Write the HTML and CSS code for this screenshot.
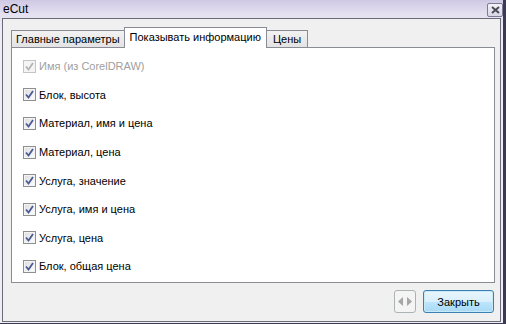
FILE: index.html
```html
<!DOCTYPE html>
<html>
<head>
<meta charset="utf-8">
<link rel="stylesheet" href="styles.css">
</head>
<body>
<div class="window">
  <div class="titlebar">
    <span class="title">eCut</span>
    <span class="tclose"><svg width="9" height="8" viewBox="0 0 9 8"><path d="M1 1 L8 7 M8 1 L1 7" stroke="#4a4a5a" stroke-width="2"/></svg></span>
  </div>
  <div class="frame">
    <div class="tabs">
      <div class="tab">Главные параметры</div>
      <div class="tab active">Показывать информацию</div>
      <div class="tab last">Цены</div>
    </div>
    <div class="panel">
      <label class="row disabled"><span class="cb"><svg width="9" height="9" viewBox="0 0 9 9"><path d="M1 4.5 L3.5 7.5 L8 1" fill="none" stroke="#b4b4b4" stroke-width="1.8"/></svg></span>Имя (из CorelDRAW)</label>
      <label class="row"><span class="cb"><svg width="9" height="9" viewBox="0 0 9 9"><path d="M1 4.5 L3.5 7.5 L8 1" fill="none" stroke="#4a5b98" stroke-width="1.8"/></svg></span>Блок, высота</label>
      <label class="row"><span class="cb"><svg width="9" height="9" viewBox="0 0 9 9"><path d="M1 4.5 L3.5 7.5 L8 1" fill="none" stroke="#4a5b98" stroke-width="1.8"/></svg></span>Материал, имя и цена</label>
      <label class="row"><span class="cb"><svg width="9" height="9" viewBox="0 0 9 9"><path d="M1 4.5 L3.5 7.5 L8 1" fill="none" stroke="#4a5b98" stroke-width="1.8"/></svg></span>Материал, цена</label>
      <label class="row"><span class="cb"><svg width="9" height="9" viewBox="0 0 9 9"><path d="M1 4.5 L3.5 7.5 L8 1" fill="none" stroke="#4a5b98" stroke-width="1.8"/></svg></span>Услуга, значение</label>
      <label class="row"><span class="cb"><svg width="9" height="9" viewBox="0 0 9 9"><path d="M1 4.5 L3.5 7.5 L8 1" fill="none" stroke="#4a5b98" stroke-width="1.8"/></svg></span>Услуга, имя и цена</label>
      <label class="row"><span class="cb"><svg width="9" height="9" viewBox="0 0 9 9"><path d="M1 4.5 L3.5 7.5 L8 1" fill="none" stroke="#4a5b98" stroke-width="1.8"/></svg></span>Услуга, цена</label>
      <label class="row"><span class="cb"><svg width="9" height="9" viewBox="0 0 9 9"><path d="M1 4.5 L3.5 7.5 L8 1" fill="none" stroke="#4a5b98" stroke-width="1.8"/></svg></span>Блок, общая цена</label>
    </div>
    <div class="footer">
      <div class="btn arrows"><svg width="14" height="9" viewBox="0 0 14 9"><path d="M0 4.5 L5 0 L5 9 Z M14 4.5 L9 0 L9 9 Z" fill="#a6a6a6"/></svg></div>
      <div class="btn primary">Закрыть</div>
    </div>
  </div>
</div>
</body>
</html>
```
FILE: styles.css
```css
html, body {
  margin: 0;
  padding: 0;
}
body {
  width: 506px;
  height: 324px;
  overflow: hidden;
  font-family: "Liberation Sans", Arial, sans-serif;
  font-size: 11px;
  color: #000;
}
.window {
  width: 506px;
  height: 324px;
  box-sizing: border-box;
  background: linear-gradient(#cfc8e4 0px, #e4e0f0 14px, #eeecf4 30px, #efeef4 100%);
  border-right: 3px solid #3c3a52;
  border-bottom: 1px solid #3c3a52;
  display: flex;
  flex-direction: column;
}
.titlebar {
  height: 18px;
  display: flex;
  align-items: center;
  justify-content: space-between;
  padding: 0 0 0 3px;
}
.title {
  font-size: 12px;
  color: #000;
  margin-top: -1px;
}
.tclose {
  width: 14px;
  height: 12px;
  border: 1px solid #7c7a94;
  border-radius: 2px;
  background: linear-gradient(#f4f3f8, #d8d6e4);
  display: flex;
  align-items: center;
  justify-content: center;
  margin-top: 1px;
  margin-right: 0;
}
.frame {
  flex: 1;
  margin: 0 2px 1px 2px;
  border: 1px solid #6a6a78;
  background: #f0f0f0;
  padding: 8px 5px 0 8px;
  display: flex;
  flex-direction: column;
}
.tabs {
  display: flex;
  align-items: flex-end;
  height: 20px;
  position: relative;
  z-index: 1;
}
.tab {
  height: 16px;
  line-height: 17px;
  padding: 0 4px;
  border: 1px solid #898c95;
  border-bottom: none;
  background: linear-gradient(#f2f2f2, #e3e3e3);
  margin-right: -1px;
  white-space: nowrap;
}
.tab.active {
  height: 20px;
  line-height: 18px;
  background: #fff;
  padding: 0 5px;
  margin-bottom: -1px;
  position: relative;
  z-index: 2;
}
.tab.last {
  padding: 0 6px;
}
.panel {
  height: 236px;
  box-sizing: border-box;
  background: #fff;
  border: 1px solid #898c95;
  padding: 4px 0 0 11px;
  display: flex;
  flex-direction: column;
}
.row {
  height: 28.6px;
  flex: none;
  display: flex;
  align-items: center;
  gap: 3px;
  white-space: nowrap;
}
.row.disabled {
  color: #a0a0a0;
}
.cb {
  width: 11px;
  height: 11px;
  border: 1px solid #8e8f8f;
  background: linear-gradient(135deg, #dcdcdc, #ffffff);
  display: flex;
  align-items: center;
  justify-content: center;
  box-shadow: inset 0 0 0 1px #f4f4f4;
}
.row.disabled .cb {
  border-color: #c4c4c4;
  background: #f4f4f4;
}
.footer {
  display: flex;
  justify-content: flex-end;
  gap: 7px;
  padding: 7px 1px 0 0;
}
.btn {
  height: 23px;
  box-sizing: border-box;
  border: 1px solid #707070;
  border-radius: 3px;
  background: linear-gradient(#f2f2f2 0%, #ebebeb 50%, #dddddd 51%, #cfcfcf 100%);
  display: flex;
  align-items: center;
  justify-content: center;
}
.arrows {
  width: 22px;
  border-color: #adb2b5;
  background: #f4f4f4;
}
.primary {
  width: 71px;
  border-color: #3c7fb1;
  background: linear-gradient(#eaf6fd 0%, #d9f0fc 50%, #bee6fd 51%, #a7d9f5 100%);
  box-shadow: inset 0 0 0 1px #c8eaf8;
}
```
